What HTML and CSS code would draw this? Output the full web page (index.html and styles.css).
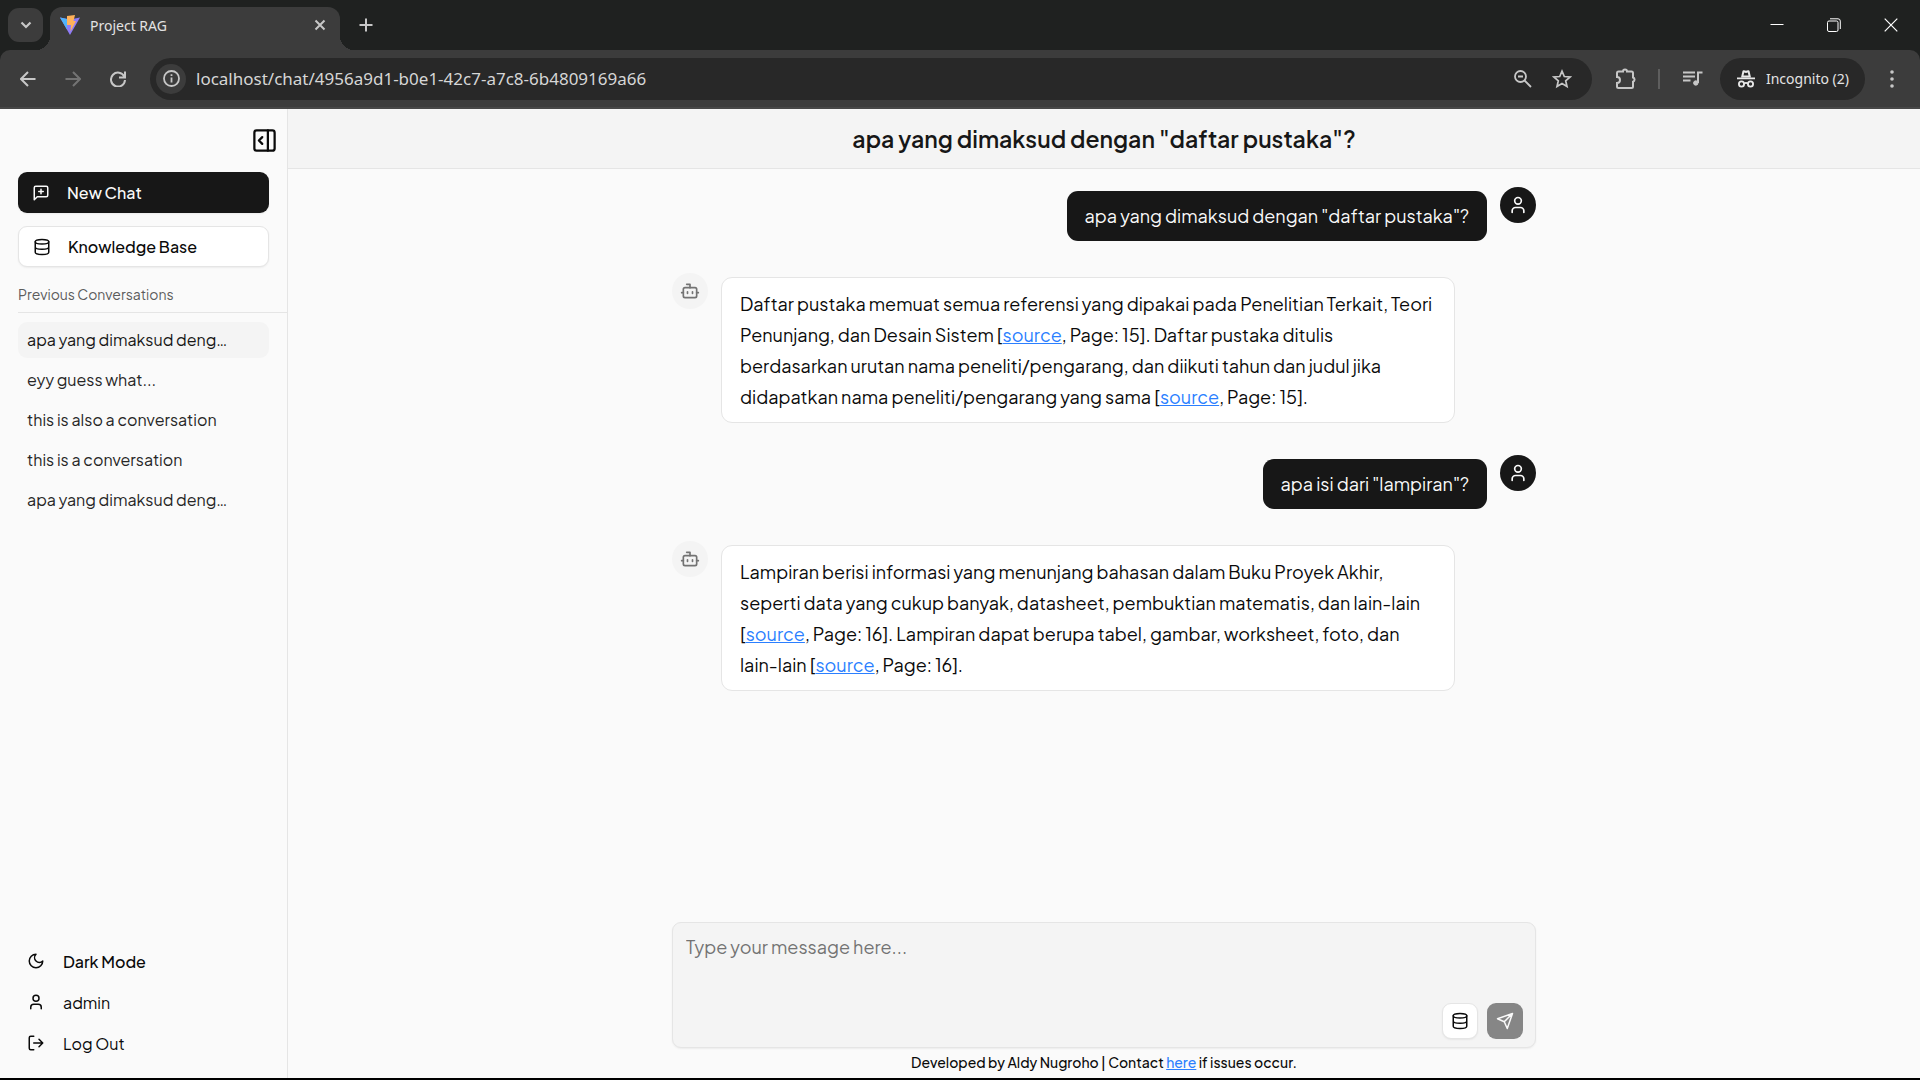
FILE: index.html
```html
<!DOCTYPE html>
<html lang="id">
<head>
<meta charset="utf-8">
<title>Project RAG</title>
<link rel="stylesheet" href="styles.css">
</head>

<body>
<div class="browser">
    <div class="tabBar">
        <button class="tabSearch" aria-label="Search tabs">
            <svg width="20" height="20" viewBox="0 0 20 20"><path d="M5.500 7.500l4.500 4.500 4.500-4.500" stroke-width="2.200"/></svg>
        </button>
        <div class="tab">
            <svg class="favicon" width="20" height="20" viewBox="0 0 20 20">
                <path d="M0 2.500L10 20 20 2.500 10 4.500z" fill="#8f7cf8"/>
                <path d="M0 2.500L7 4v10.500z" fill="#4fb4fb"/>
                <path d="M7 1l8-1-1.500 6H16l-5.500 10.500.5-6.500H7z" fill="#ffb25a"/>
            </svg>
            <span class="tabTitle">Project RAG</span>
            <button class="tabClose" aria-label="Close tab">
                <svg width="12" height="12" viewBox="0 0 12 12"><path d="M1.500 1.500l9 9M10.500 1.500l-9 9" stroke-width="2"/></svg>
            </button>
        </div>
        <button class="tabNew" aria-label="New tab">
            <svg width="14" height="14" viewBox="0 0 14 14"><path d="M7 .5v13M.5 7h13" stroke-width="2"/></svg>
        </button>
        <div class="windowButtons">
            <button aria-label="Minimize"><svg width="14" height="14" viewBox="0 0 14 14"><path d="M.5 6.500h13" stroke="#fff"/></svg></button>
            <button aria-label="Restore"><svg width="14" height="14" viewBox="0 0 14 14"><rect x=".5" y="3" width="10.500" height="10.500" rx="1.500" stroke="#fff"/><path d="M3 .8h8a2.300 2.300 0 0 1 2.300 2.300V11" stroke="#fff"/></svg></button>
            <button aria-label="Close"><svg width="14" height="14" viewBox="0 0 14 14"><path d="M.7.7l12.600 12.600M13.300.7L.7 13.300" stroke="#fff" stroke-width="1.200"/></svg></button>
        </div>
    </div>

    <div class="toolBar">
        <button class="navBtn" aria-label="Back"><svg width="16" height="16" viewBox="0 0 16 16"><path d="M15.500 8H1.500M8 1L1 8l7 7" stroke-width="2"/></svg></button>
        <button class="navBtn off" aria-label="Forward"><svg width="16" height="16" viewBox="0 0 16 16"><path d="M.5 8h14M8 1l7 7-7 7" stroke-width="2"/></svg></button>
        <button class="navBtn" aria-label="Reload"><svg width="16" height="16" viewBox="0 0 16 16"><path d="M14.300 5.500A7 7 0 1 0 15 9M15 .5v6H9" stroke-width="2"/></svg></button>
        <div class="addressBar">
            <span class="siteInfo">
                <svg width="17" height="17" viewBox="0 0 17 17"><circle cx="8.500" cy="8.500" r="7.500" stroke-width="1.800"/><path d="M8.500 7.500v5M8.500 4.300v1.800" stroke-width="1.800"/></svg>
            </span>
            <input type="text" class="url" aria-label="Address" value="localhost/chat/4956a9d1-b0e1-42c7-a7c8-6b4809169a66">
            <button aria-label="Zoom"><svg width="18" height="18" viewBox="0 0 18 18"><circle cx="6.500" cy="6.500" r="5.500" stroke-width="1.800"/><path d="M10.500 10.500l6.500 6.500M4 6.500h5" stroke-width="1.800"/></svg></button>
            <button aria-label="Bookmark this page"><svg width="20" height="20" viewBox="0 0 20 20"><path d="M10 2.200l2.300 5.300 5.800.5-4.400 3.800 1.300 5.700-5-3-5 3 1.300-5.700L1.900 8l5.800-.5z" stroke-width="1.700"/></svg></button>
        </div>
        <button class="toolBtn" aria-label="Extensions"><svg width="22" height="22" viewBox="0 0 22 22"><path d="M3.500 3.500H8a2 2 0 0 1 4 0h4.500a1.500 1.500 0 0 1 1.500 1.500v4.500a2.200 2.200 0 0 1 0 4.200V18.500a1.500 1.500 0 0 1-1.500 1.500h-13A1.500 1.500 0 0 1 2 18.500V15a3 3 0 0 0 0-6V5a1.500 1.500 0 0 1 1.500-1.500z" stroke-width="2"/></svg></button>
        <span class="toolLine"></span>
        <button class="toolBtn" aria-label="Media controls"><svg width="20" height="18" viewBox="0 0 20 18"><path d="M0 2.500h12M0 6.500h12M0 10.500h7.500M15 13V2.500h4.500" stroke-width="2"/><circle cx="12.800" cy="13" r="2.200" fill="#c7c7c7"/></svg></button>
        <button class="incognito">
            <svg width="20" height="20" viewBox="0 0 20 20"><path d="M5 8.500l1.500-6.500q.3-1 1.500-.7l2 .5 2-.5q1.200-.3 1.500.7L15 8.500z" fill="#e8e8e8" stroke="none"/><path d="M7.500 6.500l.7-3 1.800.5 1.800-.5.7 3z" fill="#282828" stroke="none"/><path d="M1 9.300h18M8 14.500q2-1.200 4 0" stroke="#e8e8e8" stroke-width="1.800"/><circle cx="5.500" cy="15" r="2.600" stroke="#e8e8e8" stroke-width="1.800"/><circle cx="14.500" cy="15" r="2.600" stroke="#e8e8e8" stroke-width="1.800"/></svg>
            <span>Incognito (2)</span>
        </button>
        <button class="menuBtn" aria-label="Menu"><svg width="4" height="18" viewBox="0 0 4 18"><g fill="#c7c7c7" stroke="none"><circle cx="2" cy="2" r="1.800"/><circle cx="2" cy="9" r="1.800"/><circle cx="2" cy="16" r="1.800"/></g></svg></button>
    </div>
</div>

<div class="app">
    <aside class="sideBar">
        <button class="sideToggle" aria-label="Close sidebar">
            <svg class="icon" width="27" height="27" viewBox="0 0 24 24"><rect x="3" y="3" width="18" height="18" rx="2"/><path d="M15 3v18M10 15l-3-3 3-3"/></svg>
        </button>
        <button class="sideBtn newChat">
            <svg class="icon" width="18" height="18" viewBox="0 0 24 24"><path d="M21 15a2 2 0 0 1-2 2H7l-4 4V5a2 2 0 0 1 2-2h14a2 2 0 0 1 2 2zM12 7v6M9 10h6"/></svg>
            New Chat
        </button>
        <button class="sideBtn knowledge">
            <svg class="icon" width="18" height="18" viewBox="0 0 24 24"><ellipse cx="12" cy="5" rx="9" ry="3"/><path d="M3 5v14a9 3 0 0 0 18 0V5M3 12a9 3 0 0 0 18 0"/></svg>
            Knowledge Base
        </button>
        <h2 class="listTitle">Previous Conversations</h2>
        <nav class="chatList">
            <a href="#" class="active">apa yang dimaksud deng…</a>
            <a href="#">eyy guess what...</a>
            <a href="#">this is also a conversation</a>
            <a href="#">this is a conversation</a>
            <a href="#">apa yang dimaksud deng…</a>
        </nav>
        <div class="sideMenu">
            <button class="darkMode">
                <svg class="icon" width="18" height="18" viewBox="0 0 24 24"><path d="M12 3a6 6 0 0 0 9 9 9 9 0 1 1-9-9Z"/></svg>
                Dark Mode
            </button>
            <button>
                <svg class="icon" width="18" height="18" viewBox="0 0 24 24"><path d="M19 21v-2a4 4 0 0 0-4-4H9a4 4 0 0 0-4 4v2"/><circle cx="12" cy="7" r="4"/></svg>
                admin
            </button>
            <button>
                <svg class="icon" width="18" height="18" viewBox="0 0 24 24"><path d="M9 21H5a2 2 0 0 1-2-2V5a2 2 0 0 1 2-2h4M16 17l5-5-5-5M21 12H9"/></svg>
                Log Out
            </button>
        </div>
    </aside>

    <main class="chat">
        <header class="chatHeader">
            <h1>apa yang dimaksud dengan "daftar pustaka"?</h1>
        </header>

        <div class="messages">
            <div class="message user">
                <p class="bubble">apa yang dimaksud dengan "daftar pustaka"?</p>
                <span class="avatar"><svg class="icon" width="20" height="20" viewBox="0 0 24 24"><path d="M19 21v-2a4 4 0 0 0-4-4H9a4 4 0 0 0-4 4v2"/><circle cx="12" cy="7" r="4"/></svg></span>
            </div>
            <div class="message bot">
                <span class="avatar"><svg class="icon" width="20" height="20" viewBox="0 0 24 24"><path d="M12 8V4H8M2 14h2M20 14h2M15 13v2M9 13v2"/><rect x="4" y="8" width="16" height="12" rx="2"/></svg></span>
                <p class="bubble">Daftar pustaka memuat semua referensi yang dipakai pada Penelitian Terkait, Teori<br>Penunjang, dan Desain Sistem [<a href="#">source</a>, Page: 15]. Daftar pustaka ditulis<br>berdasarkan urutan nama peneliti/pengarang, dan diikuti tahun dan judul jika<br>didapatkan nama peneliti/pengarang yang sama [<a href="#">source</a>, Page: 15].</p>
            </div>
            <div class="message user">
                <p class="bubble">apa isi dari "lampiran"?</p>
                <span class="avatar"><svg class="icon" width="20" height="20" viewBox="0 0 24 24"><path d="M19 21v-2a4 4 0 0 0-4-4H9a4 4 0 0 0-4 4v2"/><circle cx="12" cy="7" r="4"/></svg></span>
            </div>
            <div class="message bot">
                <span class="avatar"><svg class="icon" width="20" height="20" viewBox="0 0 24 24"><path d="M12 8V4H8M2 14h2M20 14h2M15 13v2M9 13v2"/><rect x="4" y="8" width="16" height="12" rx="2"/></svg></span>
                <p class="bubble">Lampiran berisi informasi yang menunjang bahasan dalam Buku Proyek Akhir,<br>seperti data yang cukup banyak, datasheet, pembuktian matematis, dan lain-lain<br>[<a href="#">source</a>, Page: 16]. Lampiran dapat berupa tabel, gambar, worksheet, foto, dan<br>lain-lain [<a href="#">source</a>, Page: 16].</p>
            </div>
        </div>

        <form class="chatForm">
            <textarea aria-label="Message" placeholder="Type your message here..."></textarea>
            <div class="formButtons">
                <button type="button" class="formBtn source" aria-label="Knowledge base">
                    <svg class="icon" width="18" height="18" viewBox="0 0 24 24"><ellipse cx="12" cy="5" rx="9" ry="3"/><path d="M3 5v14a9 3 0 0 0 18 0V5M3 12a9 3 0 0 0 18 0"/></svg>
                </button>
                <button type="submit" class="formBtn send" aria-label="Send" disabled>
                    <svg class="icon" width="18" height="18" viewBox="0 0 24 24"><path d="M22 2l-7 20-4-9-9-4ZM22 2L11 13"/></svg>
                </button>
            </div>
        </form>
        <footer class="credit">Developed by Aldy Nugroho | Contact <a href="#">here</a> if issues occur.</footer>
    </main>
</div>
</body>
</html>
```
FILE: styles.css
```css
*{
    box-sizing: border-box;
}

body{
    margin: 0;
    height: 100vh;
    display: flex;
    flex-direction: column;
    border-bottom: 2px solid #000;
    background-color: #fafafa;
    color: #0a0a0a;
    font-family: "Plus Jakarta Sans", Inter, sans-serif;
    font-size: 16px;
}

h1, h2, p{
    margin: 0;
}

button{
    display: flex;
    align-items: center;
    justify-content: center;
    border: none;
    padding: 0;
    background: transparent;
    color: inherit;
    font: inherit;
    cursor: pointer;
}

svg{
    display: block;
    flex: none;
    fill: none;
}

.icon{
    stroke: currentColor;
    stroke-width: 2;
    stroke-linecap: round;
    stroke-linejoin: round;
}

/* browser */
.browser{
    background-color: #1f2120;
    color: #e3e3e3;
    font-family: "Segoe UI", "Noto Sans", sans-serif;
    font-size: 14px;
}

.browser svg{
    stroke: #c7c7c7;
}

.tabBar{
    display: flex;
    align-items: center;
    height: 50px;
    padding: 0 1px 0 8px;
}

.tabSearch{
    width: 35px;
    height: 34px;
    border-radius: 11px;
    background-color: #3c3c3c;
}

.tab{
    position: relative;
    display: flex;
    align-items: center;
    align-self: flex-end;
    width: 290px;
    height: 43px;
    margin-left: 7px;
    padding: 0 14px 7px 10px;
    border-radius: 12px 12px 0 0;
    background-color: #3c3c3c;
}

.tab::before, .tab::after{
    content: "";
    position: absolute;
    bottom: 0;
    width: 14px;
    height: 14px;
}

.tab::before{
    right: 100%;
    background: radial-gradient(circle at 0 0, transparent 14px, #3c3c3c 14px);
}

.tab::after{
    left: 100%;
    background: radial-gradient(circle at 100% 0, transparent 14px, #3c3c3c 14px);
}

.tab .favicon{
    stroke: none;
}

.tabTitle{
    flex: 1;
    padding-left: 10px;
}

.tabNew{
    margin-left: 19px;
}

.windowButtons{
    display: flex;
    margin-left: auto;
}

.windowButtons button{
    width: 57px;
    height: 50px;
}

.toolBar{
    display: flex;
    align-items: center;
    height: 59px;
    padding: 0 26px 0 20px;
    border-bottom: 2px solid #474747;
    border-radius: 10px 10px 0 0;
    background-color: #3c3c3c;
}

.navBtn{
    width: 16px;
    margin-right: 29px;
}

.navBtn.off{
    opacity: 0.4;
}

.addressBar{
    display: flex;
    align-items: center;
    flex: 1;
    gap: 20px;
    height: 42px;
    margin-left: -5px;
    padding: 0 20px 0 6px;
    border-radius: 21px;
    background-color: #282828;
}

.siteInfo{
    display: flex;
    align-items: center;
    justify-content: center;
    width: 30px;
    height: 30px;
    border-radius: 15px;
    background-color: #3c3c3c;
}

.url{
    flex: 1;
    margin-left: -10px;
    border: none;
    padding: 0;
    outline: none;
    background: transparent;
    color: #d6d6d6;
    font-family: inherit;
    font-size: 17px;
}

.toolBtn{
    margin-left: 23px;
}

.toolLine{
    width: 2px;
    height: 20px;
    margin-left: 21px;
    background-color: #5e5e5e;
}

.incognito{
    gap: 10px;
    height: 42px;
    margin-left: 17px;
    padding: 0 16px;
    border-radius: 21px;
    background-color: #282828;
}

.menuBtn{
    margin-left: 25px;
}

/* app */
.app{
    display: flex;
    flex: 1;
    min-height: 0;
}

.sideBar{
    display: flex;
    flex-direction: column;
    width: 288px;
    padding: 18px 18px 17px;
    border-right: 1px solid #e5e5e5;
}

.sideToggle{
    align-self: flex-end;
    margin: 0 -9px 18px 0;
}

.sideBtn{
    justify-content: flex-start;
    gap: 17px;
    height: 41px;
    padding: 0 14px;
    border-radius: 9px;
    font-weight: 500;
    font-size: 16px;
    line-height: 20px;
    box-shadow: 0 1px 2px rgba(0, 0, 0, 0.06);
}

.newChat{
    background-color: #171717;
    color: #fafafa;
}

.knowledge{
    margin-top: 13px;
    border: 1px solid #e5e5e5;
    background-color: #fff;
}

.listTitle{
    margin: 18px -18px 0 0;
    padding-bottom: 9px;
    border-bottom: 1px solid #e5e5e5;
    color: #5c5c5c;
    font-weight: 400;
    font-size: 14px;
    line-height: 18px;
}

.chatList{
    display: flex;
    flex-direction: column;
    gap: 4px;
    margin-top: 9px;
}

.chatList a{
    padding: 0 9px;
    border-radius: 9px;
    color: #262626;
    font-size: 16px;
    line-height: 36px;
    text-decoration: none;
    white-space: nowrap;
}

.chatList .active{
    background-color: #f4f4f4;
    color: #171717;
}

.sideMenu{
    display: flex;
    flex-direction: column;
    gap: 5px;
    margin-top: auto;
    padding-left: 9px;
}

.sideMenu button{
    justify-content: flex-start;
    gap: 18px;
    height: 36px;
    font-size: 16px;
}

.sideMenu .darkMode{
    font-weight: 500;
}

.chat{
    display: flex;
    flex-direction: column;
    align-items: center;
    flex: 1;
}

.chatHeader{
    width: 100%;
    padding: 14px 0;
    border-bottom: 1px solid #e5e5e5;
    background-color: #f4f4f4;
    color: #171717;
    text-align: center;
}

.chatHeader h1{
    font-weight: 600;
    font-size: 23px;
    line-height: 31px;
}

.messages{
    display: flex;
    flex-direction: column;
    flex: 1;
    gap: 32px;
    width: 100%;
    max-width: 864px;
    padding-top: 18px;
}

.message{
    display: flex;
    align-items: flex-start;
    gap: 13px;
}

.message.user{
    justify-content: flex-end;
}

.avatar{
    display: flex;
    align-items: center;
    justify-content: center;
    flex: none;
    width: 36px;
    height: 36px;
    border-radius: 50%;
}

.user .avatar{
    background-color: #171717;
    color: #fafafa;
}

.bot .avatar{
    background-color: #f4f4f4;
    color: #737373;
}

.bubble{
    margin-top: 4px;
    border-radius: 11px;
    font-size: 18px;
    line-height: 31px;
}

.user .bubble{
    padding: 9px 18px 10px;
    background-color: #171717;
    color: #fafafa;
}

.bot .bubble{
    width: 85%;
    padding: 10px 18px;
    border: 1px solid #e5e5e5;
    background-color: #fff;
}

.bubble a, .credit a{
    color: #2b7fff;
}

.chatForm{
    display: flex;
    flex-direction: column;
    width: 100%;
    max-width: 864px;
    padding: 8px 12px 8px 13px;
    border: 1px solid #e5e5e5;
    border-radius: 9px;
    background-color: #f4f4f4;
    box-shadow: 0 1px 2px rgba(0, 0, 0, 0.06);
}

.chatForm textarea{
    height: 72px;
    border: none;
    padding: 0;
    outline: none;
    resize: none;
    background: transparent;
    font-family: inherit;
    font-size: 18px;
    line-height: 31px;
}

.chatForm textarea::placeholder{
    color: #737373;
}

.formButtons{
    display: flex;
    justify-content: flex-end;
    gap: 9px;
}

.formBtn{
    width: 36px;
    height: 36px;
    border-radius: 9px;
}

.formBtn.source{
    border: 1px solid #e5e5e5;
    background-color: #fff;
    box-shadow: 0 1px 2px rgba(0, 0, 0, 0.06);
}

.formBtn.send{
    background-color: #868686;
    color: #fafafa;
}

.credit{
    padding: 4px 0 6px;
    font-weight: 500;
    font-size: 14px;
    line-height: 20px;
}
```
